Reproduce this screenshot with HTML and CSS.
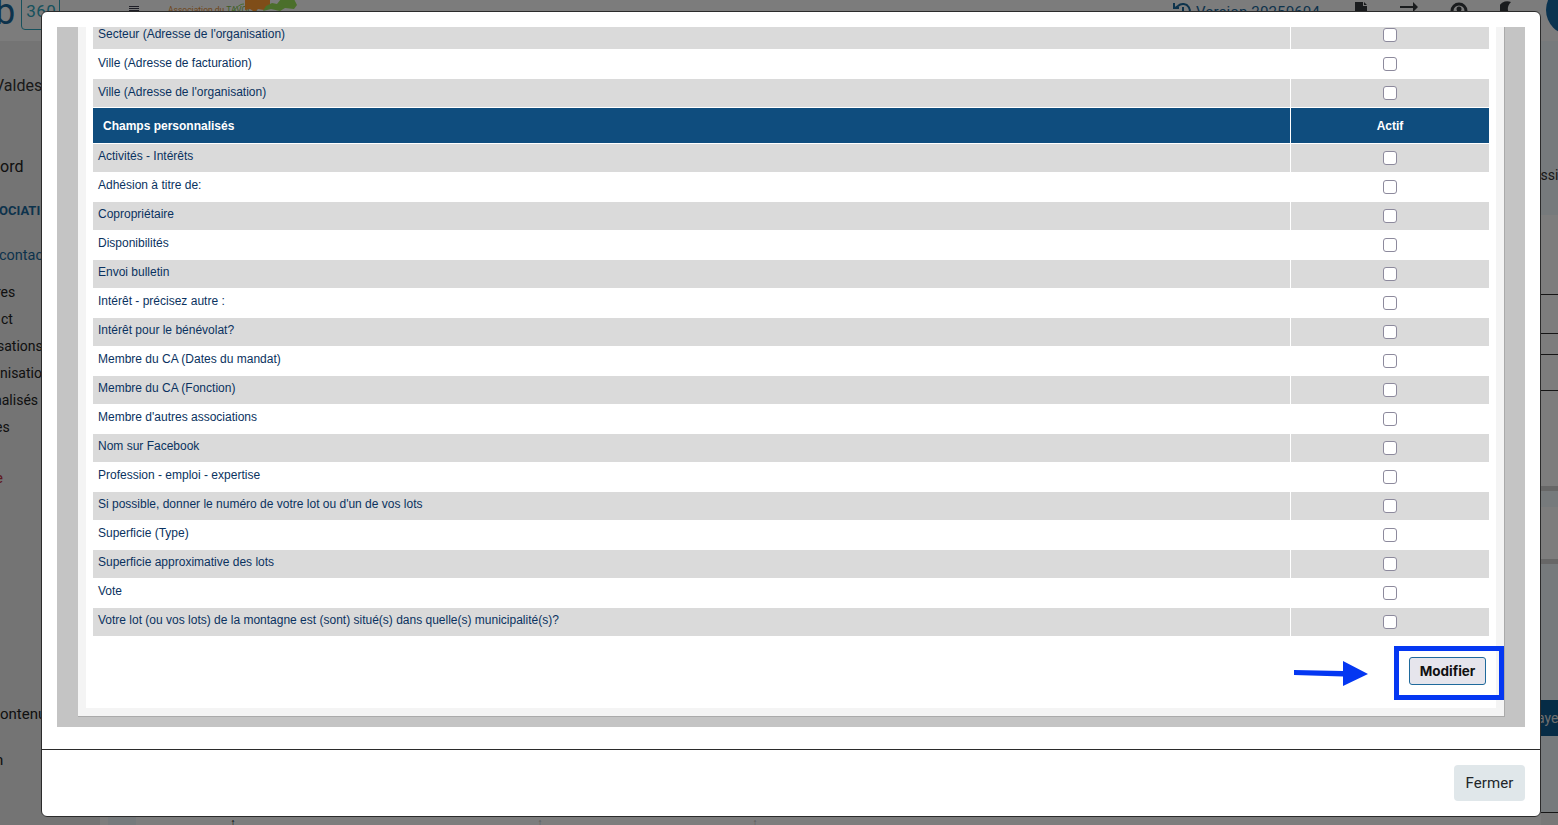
FILE: index.html
```html
<!DOCTYPE html>
<html lang="fr">
<head>
<meta charset="utf-8">
<title>Champs personnalisés</title>
<link rel="stylesheet" href="styles.css">
</head>
<body>
<div class="page">
  <header class="topbar">
    <div class="brand"><span class="brand-b">b</span><span class="brand-box">360</span></div>
    <div class="burger"><i></i><i></i><i></i></div>
    <div class="org">
      <span class="org-text">Association du <b>TAVOLA</b></span>
      <svg class="org-art" width="70" height="14" viewBox="0 0 70 14"><path d="M0 12c4-1 6-7 12-7" fill="none" stroke="#8fd85a" stroke-width="1"/><path d="M13 0h25v9l-6 2-6-1-3 3-5-3-5 1z" fill="#ff9a30"/><path d="M31 12l3-5 6-3 5 1 4-5h13l3 6-3 4-9-1-5 3-9-2z" fill="#96de56"/></svg>
    </div>
    <div class="top-right">
      <svg class="top-ic" width="20" height="18" viewBox="0 0 20 18"><path d="M4 10a7 7 0 1 0 2-6L3 6M2 1v5h5M11 5v6l3 2" fill="none" stroke="#1a6699" stroke-width="2"/></svg>
      <span class="version">Version 20250604</span>
      <svg class="t1" width="14" height="12" viewBox="0 0 14 12"><path d="M1 1h8v4h4v7H1zM10 1l3 3h-3z" fill="#34383c"/></svg>
      <svg class="t2" width="18" height="14" viewBox="0 0 18 14"><path d="M0 4h13V0l5 5-5 5V6H0z" fill="#34383c"/><path d="M4 10h3v2H4z" fill="#888"/></svg>
      <svg class="t3" width="18" height="14" viewBox="0 0 18 14"><circle cx="9" cy="9" r="7" fill="none" stroke="#34383c" stroke-width="3"/><circle cx="9" cy="7" r="2.5" fill="#34383c"/></svg>
      <svg class="t4" width="14" height="14" viewBox="0 0 14 14"><path d="M11 1a9 9 0 1 0 2 15A9 9 0 0 1 11 1z" fill="#34383c"/></svg>
      <span class="avatar"></span>
    </div>
  </header>
  <div class="under">
    <nav class="side">
      <div class="s-name">Valdes</div>
      <div class="s-home">ord</div>
      <div class="s-sec">OCIATI</div>
      <div class="s-cont">contac</div>
      <div class="s-list">
        <span class="l-res">res</span>
        <span class="l-ct">ct</span>
        <span class="l-sat">sations</span>
        <span class="l-nis">nisatio</span>
        <span class="l-nal">nalisés</span>
        <span class="l-es">es</span>
      </div>
      <div class="s-red">e</div>
      <div class="s-bot">ontenu</div>
      <div class="s-last">n</div>
    </nav>
    <main class="centre">
      <div class="strip">
        <span class="strip-cell"></span>
        <span class="strip-ar strip-ar1">↑</span>
        <span class="strip-ar strip-ar2">↑</span>
        <span class="strip-ar strip-ar3">↑</span>
      </div>
    </main>
    <aside class="rside">
      <div class="r-top"><span class="r-text">essi</span></div>
      <div class="r-row r-a"></div>
      <div class="r-row r-b"></div>
      <div class="r-row r-c"></div>
      <div class="r-row r-d"></div>
      <div class="r-row r-e"></div>
      <div class="r-row r-f"></div>
      <div class="r-row r-g"></div>
      <div class="r-row r-h"></div>
      <div class="r-row r-i"></div>
      <div class="r-btn">ayer</div>
      <div class="r-row r-j"></div>
    </aside>
  </div>
</div>

<div class="overlay"></div>

<div class="modal">
  <div class="modal-body">
    <div class="scroller">
      <div class="panel">
        <div class="panel-in">
          <table class="fields">
            <colgroup><col class="c1"><col class="c2"></colgroup>
            <tbody>
              <tr class="odd"><td>Secteur (Adresse de l'organisation)</td><td class="chk"><input type="checkbox"></td></tr>
              <tr><td>Ville (Adresse de facturation)</td><td class="chk"><input type="checkbox"></td></tr>
              <tr class="odd"><td>Ville (Adresse de l'organisation)</td><td class="chk"><input type="checkbox"></td></tr>
              <tr class="head"><th>Champs personnalisés</th><th class="act">Actif</th></tr>
              <tr class="odd"><td class="up">Activités - Intérêts</td><td class="chk"><input type="checkbox"></td></tr>
              <tr><td class="up">Adhésion à titre de:</td><td class="chk"><input type="checkbox"></td></tr>
              <tr class="odd"><td class="up">Copropriétaire</td><td class="chk"><input type="checkbox"></td></tr>
              <tr><td class="up">Disponibilités</td><td class="chk"><input type="checkbox"></td></tr>
              <tr class="odd"><td class="up">Envoi bulletin</td><td class="chk"><input type="checkbox"></td></tr>
              <tr><td class="up">Intérêt - précisez autre :</td><td class="chk"><input type="checkbox"></td></tr>
              <tr class="odd"><td class="up">Intérêt pour le bénévolat?</td><td class="chk"><input type="checkbox"></td></tr>
              <tr><td class="up">Membre du CA (Dates du mandat)</td><td class="chk"><input type="checkbox"></td></tr>
              <tr class="odd"><td class="up">Membre du CA (Fonction)</td><td class="chk"><input type="checkbox"></td></tr>
              <tr><td class="up">Membre d'autres associations</td><td class="chk"><input type="checkbox"></td></tr>
              <tr class="odd"><td class="up">Nom sur Facebook</td><td class="chk"><input type="checkbox"></td></tr>
              <tr><td class="up">Profession - emploi - expertise</td><td class="chk"><input type="checkbox"></td></tr>
              <tr class="odd"><td class="up">Si possible, donner le numéro de votre lot ou d'un de vos lots</td><td class="chk"><input type="checkbox"></td></tr>
              <tr><td class="up">Superficie (Type)</td><td class="chk"><input type="checkbox"></td></tr>
              <tr class="odd"><td class="up">Superficie approximative des lots</td><td class="chk"><input type="checkbox"></td></tr>
              <tr><td class="up">Vote</td><td class="chk"><input type="checkbox"></td></tr>
              <tr class="odd"><td class="up">Votre lot (ou vos lots) de la montagne est (sont) situé(s) dans quelle(s) municipalité(s)?</td><td class="chk"><input type="checkbox"></td></tr>
            </tbody>
          </table>
          <div class="actions">
            <svg class="arrow" width="76" height="27" viewBox="0 0 76 27"><path d="M1 10l49 1V1l25 13-25 12V16.5L1 15z" fill="#0437f2"/></svg>
            <div class="callout"><button class="btn-mod" type="button">Modifier</button></div>
          </div>
        </div>
      </div>
    </div>
  </div>
  <div class="modal-foot"><button class="btn-close" type="button">Fermer</button></div>
</div>
</body>
</html>
```
FILE: styles.css
```css
* { box-sizing: border-box; }
html, body { margin: 0; height: 100%; overflow: hidden; }
body { font-family: "Roboto", "Liberation Sans", sans-serif; color: #212529; background: #f8f8f8; }

/* page behind the dialog */
.page { height: 825px; display: flex; flex-direction: column; overflow: hidden; }
.topbar { height: 41px; flex: none; display: flex; align-items: flex-start; background: #f8f8f8; }
.brand { display: flex; width: 134px; margin-left: -5px; flex: none; }
.brand-b { font-size: 36px; line-height: 34px; color: #1a6699; font-weight: 400; margin-top: -5px; }
.brand-box { margin: -4px 0 0 6px; width: 39px; height: 34px; border: 1.5px solid #2ea3bb; border-radius: 4px; font-size: 17px; line-height: 20px; color: #2ea3bb; padding: 4px 0 0 4px; letter-spacing: .5px; }
.burger { display: flex; flex-direction: column; gap: 1px; padding-top: 6px; flex: none; width: 39px; }
.burger i { display: block; width: 10px; height: 1px; background: #3c3c4c; }
.org { position: relative; width: 140px; flex: none; }
.org-text { font-size: 8.5px; line-height: 10px; color: #e08a30; display: block; padding-top: 5px; white-space: nowrap; }
.org-text b { color: #7fb84a; font-weight: 400; }
.org-art { position: absolute; left: 64px; top: -1px; }
.top-right { margin-left: auto; display: flex; align-items: flex-start; padding-top: 1px; }
.top-ic { margin-top: 1px; }
.version { font-size: 15px; line-height: 18px; color: #1a6699; margin: 2px 0 0 4px; letter-spacing: .15px; white-space: nowrap; }
.t1 { margin-left: 34px; }
.t2 { margin: 1px 0 0 32px; }
.t3 { margin: 1px 0 0 32px; }
.t4 { margin: 0 0 0 32px; }
.avatar { width: 50px; height: 50px; border-radius: 50%; background: #1466a0; margin: -16px -38px 0 32px; flex: none; }

.under { flex: 1; display: flex; min-height: 0; }
.side { width: 100px; flex: none; font-size: 14px; line-height: 20px; background: #e8e8e8; white-space: nowrap; display: flex; flex-direction: column; overflow: hidden; color: #222; }
.s-name { font-size: 16px; margin: 35px 0 0 -6px; color: #333; }
.s-home { margin-top: 61px; font-size: 16px; }
.s-sec { margin: 24px 0 0 -1px; font-weight: 700; font-size: 13px; color: #1a6699; }
.s-cont { margin: 25px 0 0 -1px; font-size: 14.5px; color: #1a6699; }
.s-list { display: flex; flex-direction: column; gap: 7.2px; margin-top: 15.5px; }
.l-res { margin-left: -4px; }
.l-ct { margin-left: 1px; }
.l-sat { margin-left: -3px; }
.l-nal { margin-left: -6px; }
.l-es { margin-left: -5px; }
.s-red { margin: 30.5px 0 0 -5px; color: #c0303f; font-size: 15px; }
.s-bot { margin-top: 216px; font-size: 15px; }
.s-last { margin: 26px 0 0 -5px; font-size: 15px; }

.centre { flex: 1; display: flex; flex-direction: column; justify-content: flex-end; min-width: 0; }
.strip { height: 8px; display: flex; align-items: flex-start; overflow: hidden; background: #fafafa; font-size: 11px; line-height: 11px; }
.strip-cell { width: 28px; height: 8px; margin-left: 8px; background: #ecf4f8; flex: none; }
.strip-ar { flex: none; width: 10px; text-align: center; color: #bbb; }
.strip-ar1 { margin-left: 92px; color: #111; }
.strip-ar2 { margin-left: 297px; }
.strip-ar3 { margin-left: 205px; }

.rside { width: 17px; flex: none; display: flex; flex-direction: column; background: #f0f0f0; overflow: hidden; font-size: 14px; white-space: nowrap; }
.r-top { height: 174px; flex: none; background: #ecf4f8; padding: 124px 0 0 0; line-height: 20px; color: #333; }
.r-text { display: block; margin-left: -8px; }
.r-row { flex: none; border-bottom: 1px solid #2c2c2c; background: #fafafa; }
.r-a { height: 80px; }
.r-b { height: 39px; }
.r-c { height: 21px; }
.r-d { height: 36px; }
.r-e { height: 95px; border: 0; }
.r-f { height: 5px; border: 0; background: #cfcfcf; }
.r-g { height: 16px; border: 0; background: #ecf4f8; }
.r-h { height: 52px; border: 0; }
.r-i { height: 141px; border: 0; background: #ecf4f8; border-top: 5px solid #cfcfcf; }
.r-btn { height: 36px; flex: none; background: #0c588c; color: #ddd; line-height: 36px; padding-left: 0; margin-left: -4px; }
.r-j { height: 77px; background: #ecf4f8; }

.overlay { position: fixed; inset: 0; background: rgba(0, 0, 0, .5); }

/* dialog */
.modal { position: fixed; left: 41px; top: 11px; width: 1500px; height: 806px; background: #fff; border: 1px solid #2b2b2b; border-radius: 6px; display: flex; flex-direction: column; }
.modal-body { height: 737px; flex: none; padding: 15px 15px 21px; }
.scroller { height: 700px; background: #c4c4c4; padding: 0 20px 10px 21px; overflow: hidden; }
.panel { height: 690px; background: #f4f4f4; padding: 0 8px 8px; border-right: 1px solid #aaa; border-bottom: 1px solid #aaa; }
.panel-in { display: flow-root; height: 681px; background: #fff; padding: 0 7px; }

.fields { width: 1398px; margin: -7px 0 0 -1px; border-collapse: separate; border-spacing: 1px; table-layout: fixed; font-family: "Liberation Sans", Arial, sans-serif; font-size: 12px; color: #0a3260; }
.c2 { width: 198px; }
.fields td { height: 28px; padding: 0 5px 3px; vertical-align: middle; }
.fields td.up { padding-bottom: 5px; }
.odd td { background: #dadada; }
.head th { height: 35px; background: #0f4d7e; color: #fff; font-weight: 700; text-align: left; padding: 0 10px; }
.head .act { text-align: center; padding: 0; }
.fields .chk { padding: 0; text-align: center; }
.chk input { appearance: none; display: block; width: 14px; height: 14px; margin: 0 auto; background: #fff; border: 1px solid #8d8a9d; border-radius: 3px; }

.actions { display: flex; align-items: flex-start; justify-content: flex-end; padding-top: 9px; margin-right: -15px; }
.arrow { margin: 14px 25px 0 0; flex: none; }
.callout { width: 110px; height: 54px; flex: none; border: 5px solid #0437f2; padding: 6px 0 0 10px; }
.btn-mod { display: block; width: 77px; height: 28px; padding: 0; background: #e6e5ec; border: 1px solid #1f6a9c; border-radius: 3px; font: 700 13.5px "Inter", "Roboto", sans-serif; color: #111; }

.modal-foot { flex: 1; border-top: 1px solid #2b2b2b; display: flex; justify-content: flex-end; align-items: flex-start; padding: 15px 15px 0 0; }
.btn-close { width: 71px; height: 36px; padding: 0; background: #e0e7ea; border: 0; border-radius: 4px; font: 400 15px "Roboto", sans-serif; color: #212529; letter-spacing: .1px; }
```
